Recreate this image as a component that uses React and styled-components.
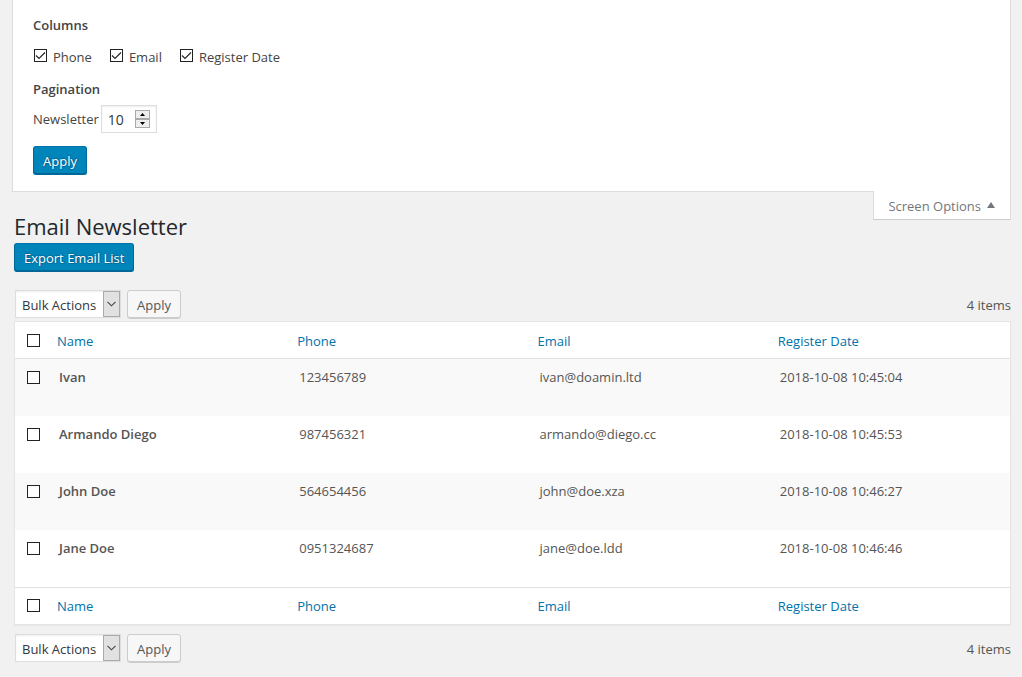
import React, { useState } from 'react';
import styled, { createGlobalStyle, css } from 'styled-components';

const GlobalStyle = createGlobalStyle`
  *, *::before, *::after { box-sizing: border-box; }
  body {
    margin: 0;
    background: #f1f1f1;
    color: #444;
    font-family: "Open Sans", "Noto Sans", sans-serif;
    font-size: 13px;
    line-height: 18px;
  }
  button, input, select { font-family: inherit; margin: 0; }
`;

const Page = styled.div`
  padding: 0 11px 12px 12px;
`;

const ScreenMeta = styled.section`
  display: flex;
  flex-direction: column;
`;

const OptionsPanel = styled.form`
  padding: 15px 20px 16px;
  background: #fff;
  border: 1px solid #ddd;
  border-top: 0;
`;

const Group = styled.fieldset`
  margin: 0;
  padding: 0;
  border: 0;
`;

const Legend = styled.legend`
  padding: 0;
  font-weight: 600;
  line-height: 20px;
`;

const CheckRow = styled.div`
  display: flex;
  gap: 18px;
  padding: 12px 0 12px 1px;
`;

const CheckLabel = styled.label`
  display: flex;
  gap: 6px;
  line-height: 20px;
`;

const Checkbox = styled.input.attrs({ type: 'checkbox' })`
  appearance: none;
  display: block;
  flex: none;
  width: 13px;
  height: 13px;
  border: 1px solid #222;
  background: #fff;
  ${CheckLabel} & { margin-top: 2px; }
  &:checked {
    background: #fff
      url("data:image/svg+xml,%3Csvg xmlns='http://www.w3.org/2000/svg' viewBox='0 0 11 11'%3E%3Cpath d='M1 5.5 4 8.5 10 2.5' fill='none' stroke='%23222' stroke-width='1.1'/%3E%3C/svg%3E")
      center / 11px 11px no-repeat;
  }
`;

const PageSizeRow = styled.div`
  display: flex;
  align-items: center;
  gap: 2px;
  padding: 6px 0 13px;
`;

const NumberBox = styled.div`
  display: flex;
  align-items: center;
  width: 56px;
  height: 28px;
  padding: 0 6px;
  border: 1px solid #ddd;
  background: #fff;
  box-shadow: inset 0 1px 2px rgba(0, 0, 0, 0.07);
`;

const NumberInput = styled.input`
  appearance: textfield;
  flex: 1;
  min-width: 0;
  padding: 0;
  border: 0;
  outline: 0;
  background: none;
  color: #32373c;
  font-size: 14px;
  &::-webkit-inner-spin-button { appearance: none; }
`;

const Spinner = styled.span`
  display: flex;
  flex-direction: column;
  width: 15px;
  height: 18px;
`;

const SpinButton = styled.button`
  display: grid;
  place-items: center;
  flex: 1;
  padding: 0;
  border: 1px solid #aaa;
  background: #eee;
`;

const Button = styled.button`
  height: 29px;
  padding: 1px 9px 0;
  border: 1px solid #ccc;
  border-radius: 3px;
  font-size: 13px;
  line-height: 26px;
  white-space: nowrap;
  cursor: pointer;
  background: #f7f7f7;
  color: #555;
  box-shadow: inset 0 -1px 0 #ccc;
  ${(p) =>
    p.$primary &&
    css`
      background: #0085ba;
      border-color: #0073aa #006799 #006799;
      color: #fff;
      box-shadow: inset 0 -1px 0 #006799;
      text-shadow: 0 -1px 1px #006799, 1px 0 1px #006799, 0 1px 1px #006799;
    `}
`;

const OptionsToggle = styled.button`
  display: flex;
  align-items: center;
  align-self: flex-end;
  gap: 6px;
  height: 29px;
  margin-top: -1px;
  padding: 1px 15px 0 14px;
  border: 1px solid #ddd;
  border-top: 0;
  border-bottom-color: #ccc;
  background: #fff;
  color: #72777c;
  font-size: 13px;
`;

const Content = styled.main`
  margin: -10px 0 0 2px;
`;

const Title = styled.h1`
  margin: 0 0 1px;
  color: #23282d;
  font-size: 22px;
  font-weight: 400;
  line-height: 32px;
`;

const TableNav = styled.div`
  display: flex;
  align-items: flex-start;
  gap: 6px;
  padding-left: 1px;
  margin: ${(p) => (p.$bottom ? '9px 0 0' : '18px 0 2px')};
`;

const SelectBox = styled.div`
  position: relative;
  width: 106px;
  height: 28px;
`;

const Select = styled.select`
  appearance: none;
  width: 100%;
  height: 100%;
  padding: 1px 20px 0 6px;
  border: 1px solid #ddd;
  border-radius: 0;
  background: #fff;
  color: #32373c;
  font-size: 13px;
  box-shadow: inset 0 1px 2px rgba(0, 0, 0, 0.07);
`;

const SelectArrow = styled.span`
  position: absolute;
  top: 1px;
  right: 1px;
  bottom: 1px;
  width: 17px;
  display: grid;
  place-items: center;
  border: 1px solid #aaa;
  background: #e1e1e1;
  pointer-events: none;
`;

const ItemCount = styled.span`
  align-self: center;
  margin-left: auto;
  color: #555;
`;

const Table = styled.table`
  width: 100%;
  table-layout: fixed;
  border-collapse: separate;
  border-spacing: 0;
  border: 1px solid #e5e5e5;
  background: #fff;
  box-shadow: 0 1px 1px rgba(0, 0, 0, 0.04);
`;

const HeadCell = styled.th`
  height: 37px;
  padding: ${(p) => (p.$foot ? '0 8px' : '2px 8px 0')};
  text-align: left;
  font-weight: 400;
  font-size: 13px;
  border-${(p) => (p.$foot ? 'top' : 'bottom')}: 1px solid #e1e1e1;
`;

const HeadCheckCell = styled(HeadCell).attrs({ as: 'td' })`
  width: 34px;
  padding: ${(p) => (p.$foot ? '0 0 2px 12px' : '0 0 0 12px')};
`;

const SortLink = styled.a`
  color: #0073aa;
  text-decoration: none;
`;

const Row = styled.tr`
  height: 57px;
  background: #fff;
  &:nth-child(odd) { background: #f9f9f9; }
`;

const Cell = styled.td`
  padding: 9px 10px;
  vertical-align: top;
  text-align: left;
  color: #555;
  font-weight: ${(p) => (p.$strong ? 600 : 400)};
`;

const CheckCell = styled(Cell)`
  padding: 12px 0 0 12px;
`;

const COLUMNS = ['Name', 'Phone', 'Email', 'Register Date'];
const SUBSCRIBERS = [
  { name: 'Ivan', phone: '123456789', email: 'ivan@doamin.ltd', date: '2018-10-08 10:45:04' },
  { name: 'Armando Diego', phone: '987456321', email: 'armando@diego.cc', date: '2018-10-08 10:45:53' },
  { name: 'John Doe', phone: '564654456', email: 'john@doe.xza', date: '2018-10-08 10:46:27' },
  { name: 'Jane Doe', phone: '0951324687', email: 'jane@doe.ldd', date: '2018-10-08 10:46:46' },
];

function HeaderRow({ foot }) {
  return (
    <tr>
      <HeadCheckCell $foot={foot}>
        <Checkbox aria-label="Select all" />
      </HeadCheckCell>
      {COLUMNS.map((name) => (
        <HeadCell key={name} scope="col" $foot={foot}>
          <SortLink href="#">{name}</SortLink>
        </HeadCell>
      ))}
    </tr>
  );
}

function BulkNav({ bottom }) {
  return (
    <TableNav $bottom={bottom}>
      <SelectBox>
        <Select aria-label="Select bulk action">
          <option>Bulk Actions</option>
        </Select>
        <SelectArrow aria-hidden="true">
          <svg width="9" height="6" viewBox="0 0 9 6">
            <path d="M0.5 0.8 4.5 4.8 8.5 0.8" fill="none" stroke="#444" strokeWidth="1.1" />
          </svg>
        </SelectArrow>
      </SelectBox>
      <Button type="button">Apply</Button>
      <ItemCount>4 items</ItemCount>
    </TableNav>
  );
}

export default function App() {
  const [perPage, setPerPage] = useState(10);
  return (
    <>
      <GlobalStyle />
      <Page>
        <ScreenMeta>
          <OptionsPanel onSubmit={(e) => e.preventDefault()}>
            <Group>
              <Legend>Columns</Legend>
              <CheckRow>
                {COLUMNS.slice(1).map((name) => (
                  <CheckLabel key={name}>
                    <Checkbox defaultChecked />
                    {name}
                  </CheckLabel>
                ))}
              </CheckRow>
            </Group>
            <Group>
              <Legend>Pagination</Legend>
              <PageSizeRow>
                <label htmlFor="per-page">Newsletter</label>
                <NumberBox>
                  <NumberInput
                    id="per-page"
                    type="number"
                    value={perPage}
                    onChange={(e) => setPerPage(Number(e.target.value))}
                  />
                  <Spinner>
                    <SpinButton type="button" aria-label="Increase" onClick={() => setPerPage(perPage + 1)}>
                      <svg width="5" height="3" viewBox="0 0 5 3"><path d="M0 3 2.5 0 5 3z" /></svg>
                    </SpinButton>
                    <SpinButton type="button" aria-label="Decrease" onClick={() => setPerPage(perPage - 1)}>
                      <svg width="5" height="3" viewBox="0 0 5 3"><path d="M0 0 2.5 3 5 0z" /></svg>
                    </SpinButton>
                  </Spinner>
                </NumberBox>
              </PageSizeRow>
            </Group>
            <Button $primary type="submit">Apply</Button>
          </OptionsPanel>
          <OptionsToggle type="button">
            Screen Options
            <svg width="8" height="8" viewBox="0 0 8 8"><path d="M0 6 4 0 8 6z" fill="#72777c" /></svg>
          </OptionsToggle>
        </ScreenMeta>
        <Content>
          <Title>Email Newsletter</Title>
          <Button $primary type="button">Export Email List</Button>
          <BulkNav />
          <Table>
            <thead><HeaderRow /></thead>
            <tbody>
              {SUBSCRIBERS.map((s) => (
                <Row key={s.name}>
                  <CheckCell><Checkbox aria-label={`Select ${s.name}`} /></CheckCell>
                  <Cell $strong>{s.name}</Cell>
                  <Cell>{s.phone}</Cell>
                  <Cell>{s.email}</Cell>
                  <Cell>{s.date}</Cell>
                </Row>
              ))}
            </tbody>
            <tfoot><HeaderRow foot /></tfoot>
          </Table>
          <BulkNav bottom />
        </Content>
      </Page>
    </>
  );
}
